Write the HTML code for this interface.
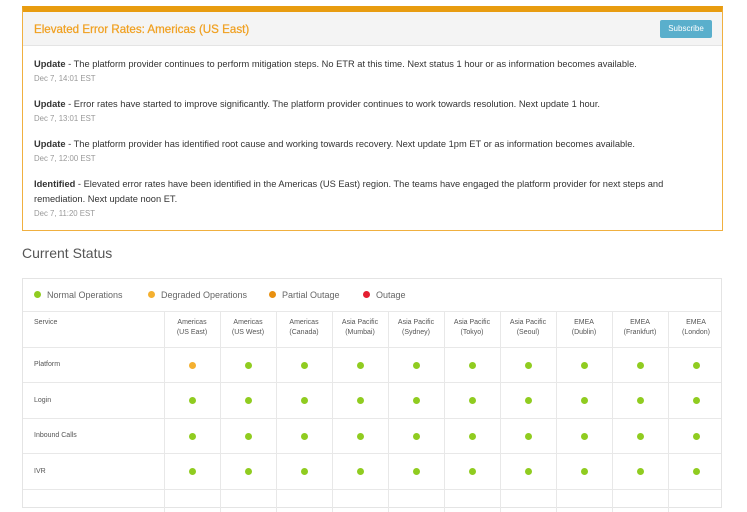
<!DOCTYPE html>
<html><head><style>
body{margin:0;background:#fff;font-family:"Liberation Sans",sans-serif;color:#333;width:747px;height:495px;overflow:hidden;position:relative}
.box{position:absolute;left:22px;top:6px;width:699px;height:218px;border:1px solid #f0b040;border-top:6px solid #e89c10;box-sizing:content-box}
.hd{height:33px;background:#f4f4f4;border-bottom:1px solid #e4e4e4;position:relative}
.hd h1{margin:0;position:absolute;left:11px;top:11px;font-size:11.6px;color:#f0a020;font-weight:normal;-webkit-text-stroke:0.25px #f0a020}
.btn{position:absolute;right:10px;top:8px;width:52px;height:18px;background:#5aafcc;border-radius:2px;color:#fff;font-size:8px;line-height:18px;text-align:center}
.up{position:absolute;left:11px;font-size:9.3px;color:#333;line-height:15px;width:675px}
.up b{font-weight:bold}
.up .d{font-size:7.8px;color:#999;line-height:13px;display:block}
.cs{position:absolute;left:22px;top:245px;font-size:14px;color:#555}
.tb{position:absolute;left:22px;top:278px;width:700px;height:230px;border:1px solid #e4e4e4;box-sizing:border-box}
.lg{position:absolute;top:11px;font-size:9px;color:#666}
.dot{display:inline-block;width:7px;height:7px;border-radius:50%;vertical-align:-0px;margin-right:6px}
.g{background:#90cc20}.y{background:#f4b030}.o{background:#e89010}.r{background:#e41e30}
.hl{position:absolute;left:0;width:698px;height:1px;background:#e8e8e8}
.vl{position:absolute;top:33px;width:1px;height:200px;background:#e8e8e8}
.c{position:absolute;font-size:7px;color:#555;text-align:center;width:56px;line-height:10px}
.s{position:absolute;left:11px;font-size:7px;color:#555}
.cd{position:absolute;width:7px;height:7px;border-radius:50%}
</style></head><body>
<div class="box"><div class="hd"><h1>Elevated Error Rates: Americas (US East)</h1><div class="btn">Subscribe</div></div>
<div class="up" style="top:45px"><b>Update</b> - The platform provider continues to perform mitigation steps. No ETR at this time. Next status 1 hour or as information becomes available.<span class="d">Dec 7, 14:01 EST</span></div>
<div class="up" style="top:85px"><b>Update</b> - Error rates have started to improve significantly. The platform provider continues to work towards resolution. Next update 1 hour.<span class="d">Dec 7, 13:01 EST</span></div>
<div class="up" style="top:125px"><b>Update</b> - The platform provider has identified root cause and working towards recovery. Next update 1pm ET or as information becomes available.<span class="d">Dec 7, 12:00 EST</span></div>
<div class="up" style="top:165px"><b>Identified</b> - Elevated error rates have been identified in the Americas (US East) region. The teams have engaged the platform provider for next steps and remediation. Next update noon ET.<span class="d">Dec 7, 11:20 EST</span></div>
</div>
<div class="cs">Current Status</div>
<div class="tb">
<div class="lg" style="left:11px"><span class="dot g"></span>Normal Operations</div>
<div class="lg" style="left:125px"><span class="dot y"></span>Degraded Operations</div>
<div class="lg" style="left:246px"><span class="dot o"></span>Partial Outage</div>
<div class="lg" style="left:340px"><span class="dot r"></span>Outage</div>
<div class="hl" style="top:32px"></div><div class="hl" style="top:68px"></div><div class="hl" style="top:103px"></div><div class="hl" style="top:139px"></div><div class="hl" style="top:174px"></div><div class="hl" style="top:210px"></div>
<div class="s" style="top:40px">Service</div>
<div class="s" style="top:82px">Platform</div>
<div class="s" style="top:118px">Login</div>
<div class="s" style="top:153px">Inbound Calls</div>
<div class="s" style="top:189px">IVR</div>
<div id="cols"></div>
</div>
<script>
var n=["Americas<br>(US East)","Americas<br>(US West)","Americas<br>(Canada)","Asia Pacific<br>(Mumbai)","Asia Pacific<br>(Sydney)","Asia Pacific<br>(Tokyo)","Asia Pacific<br>(Seoul)","EMEA<br>(Dublin)","EMEA<br>(Frankfurt)","EMEA<br>(London)"];
var h="";for(var i=0;i<10;i++){var x=141+i*56;h+='<div class="vl" style="left:'+x+'px"></div><div class="c" style="left:'+x+'px;top:39px">'+n[i]+'</div>';
[86,121,157,192].forEach(function(y,j){h+='<div class="cd '+(i==0&&j==0?'y':'g')+'" style="left:'+(x+25)+'px;top:'+(y-3)+'px"></div>'});}
document.getElementById('cols').innerHTML=h;
</script>
</body></html>
